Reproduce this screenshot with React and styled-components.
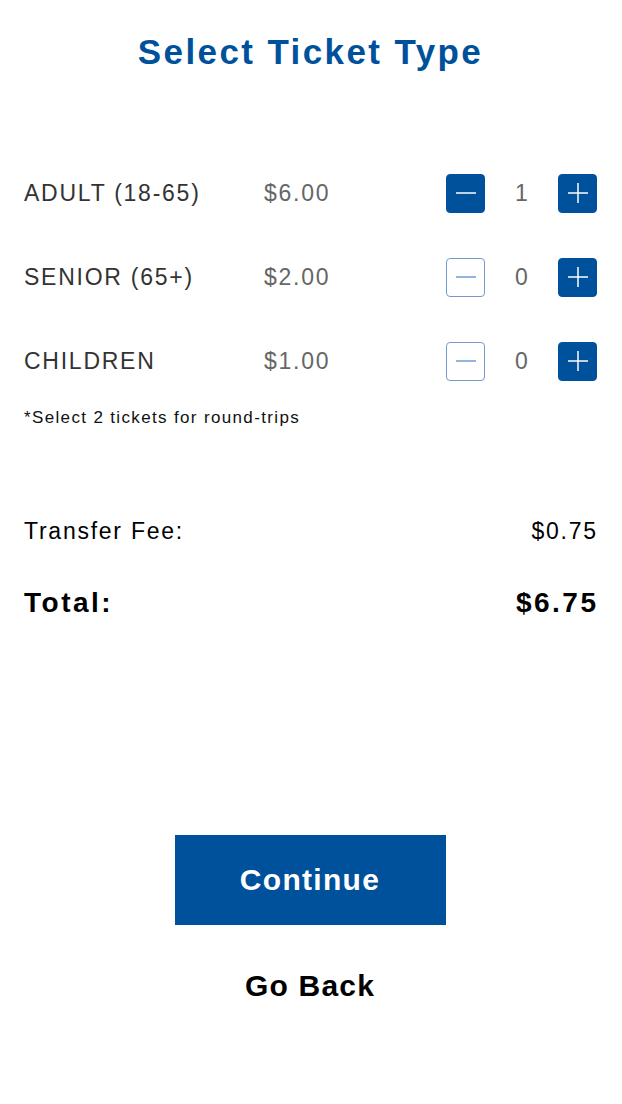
import React, { useState } from "react";
import styled, { createGlobalStyle } from "styled-components";

const GlobalStyle = createGlobalStyle`
  body {
    margin: 0;
    background: #fff;
    font-family: "Liberation Sans", Arial, sans-serif;
  }
`;

const BLUE = "#00519b";

const Page = styled.div`
  padding: 0 25px 0 24px;
  display: flex;
  flex-direction: column;
`;

const Title = styled.h1`
  margin: 32px 0 0;
  font-size: 35px;
  line-height: 40px;
  font-weight: 700;
  letter-spacing: 2.4px;
  color: ${BLUE};
  text-align: center;
`;

const TicketList = styled.div`
  margin-top: 79px;
  display: flex;
  flex-direction: column;
`;

const Row = styled.div`
  height: 84px;
  display: flex;
  align-items: center;
`;

const Label = styled.span`
  width: 240px;
  font-size: 23px;
  letter-spacing: 1.75px;
  color: #333;
`;

const Price = styled.span`
  flex: 1;
  font-size: 23px;
  letter-spacing: 1.75px;
  color: #666;
`;

const Stepper = styled.div`
  display: flex;
  align-items: center;
`;

const StepButton = styled.button`
  width: 39px;
  height: 39px;
  padding: 0;
  border-radius: 4px;
  border: 1px solid ${(p) => (p.$off ? "#6f9bd1" : BLUE)};
  background: ${(p) => (p.$off ? "#fff" : BLUE)};
  color: ${(p) => (p.$off ? "#6f9bd1" : "#fff")};
  display: flex;
  align-items: center;
  justify-content: center;
  cursor: pointer;
`;

const Count = styled.span`
  width: 73px;
  text-align: center;
  font-size: 23px;
  color: #666;
`;

const Note = styled.p`
  margin: 5px 0 0;
  font-size: 17px;
  line-height: 20px;
  letter-spacing: 1.35px;
  color: #111;
`;

const SumRow = styled.div`
  display: flex;
  justify-content: space-between;
  align-items: center;
  margin-top: ${(p) => p.$top}px;
  font-size: ${(p) => (p.$big ? 28 : 23)}px;
  font-weight: ${(p) => (p.$big ? 700 : 400)};
  letter-spacing: ${(p) => (p.$big ? 2.5 : 1.75)}px;
  line-height: 32px;
  color: #000;
`;

const Amount = styled.span`
  margin-right: ${(p) => (p.$big ? -1.5 : -0.75)}px;
`;

const Actions = styled.div`
  margin-top: 216px;
  margin-right: 1px;
  display: flex;
  flex-direction: column;
  align-items: center;
`;

const Continue = styled.button`
  width: 271px;
  height: 90px;
  border: none;
  background: ${BLUE};
  color: #fff;
  font-family: inherit;
  font-size: 30px;
  font-weight: 700;
  letter-spacing: 1.3px;
  cursor: pointer;
`;

const GoBack = styled.button`
  margin-top: 43px;
  border: none;
  background: none;
  padding: 0;
  font-family: inherit;
  font-size: 30px;
  line-height: 36px;
  font-weight: 700;
  letter-spacing: 1.2px;
  color: #000;
  cursor: pointer;
`;

function Minus() {
  return (
    <svg width="22" height="22" viewBox="0 0 22 22">
      <line x1="1" y1="11" x2="21" y2="11" stroke="currentColor" strokeWidth="1.5" />
    </svg>
  );
}

function Plus() {
  return (
    <svg width="22" height="22" viewBox="0 0 22 22">
      <line x1="1" y1="11" x2="21" y2="11" stroke="currentColor" strokeWidth="1.5" />
      <line x1="11" y1="1" x2="11" y2="21" stroke="currentColor" strokeWidth="1.5" />
    </svg>
  );
}

const tickets = [
  { name: "ADULT (18-65)", price: 6 },
  { name: "SENIOR (65+)", price: 2 },
  { name: "CHILDREN", price: 1 },
];

export default function App() {
  const [counts, setCounts] = useState([1, 0, 0]);
  const fee = 0.75;

  const change = (i, d) => {
    setCounts((c) => c.map((n, j) => (j === i ? Math.max(0, n + d) : n)));
  };

  const total = tickets.reduce((s, t, i) => s + t.price * counts[i], 0) + fee;

  return (
    <Page>
      <GlobalStyle />
      <Title>Select Ticket Type</Title>
      <TicketList>
        {tickets.map((t, i) => (
          <Row key={t.name}>
            <Label>{t.name}</Label>
            <Price>${t.price.toFixed(2)}</Price>
            <Stepper>
              <StepButton $off={counts[i] === 0} onClick={() => change(i, -1)}>
                <Minus />
              </StepButton>
              <Count>{counts[i]}</Count>
              <StepButton onClick={() => change(i, 1)}>
                <Plus />
              </StepButton>
            </Stepper>
          </Row>
        ))}
      </TicketList>
      <Note>*Select 2 tickets for round-trips</Note>
      <SumRow $top={87}>
        <span>Transfer Fee:</span>
        <Amount>${fee.toFixed(2)}</Amount>
      </SumRow>
      <SumRow $big $top={40}>
        <span>Total:</span>
        <Amount $big>${total.toFixed(2)}</Amount>
      </SumRow>
      <Actions>
        <Continue>Continue</Continue>
        <GoBack>Go Back</GoBack>
      </Actions>
    </Page>
  );
}
